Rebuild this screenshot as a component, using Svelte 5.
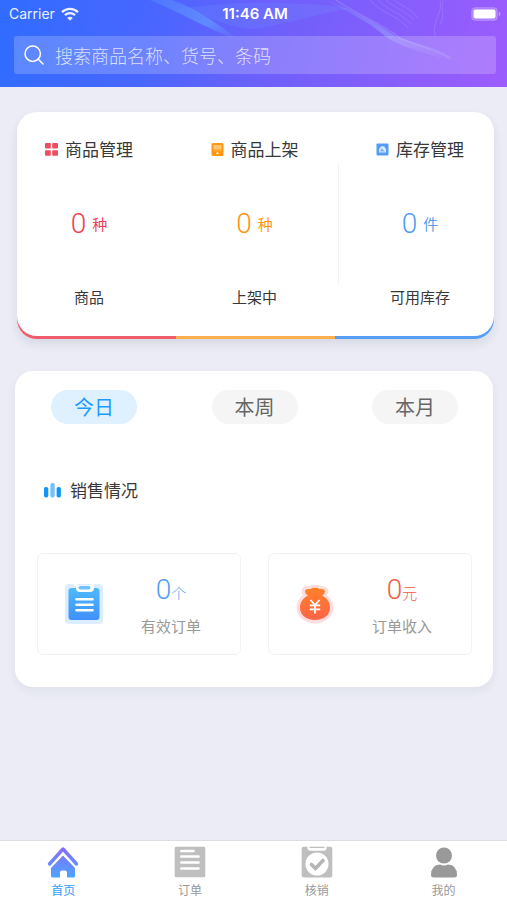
<script>
  let keyword = $state('');
  let period = $state('今日');
  const periods = ['今日', '本周', '本月'];
  const stats = [
    { title: '商品管理', icon: 'grid', value: 0, unit: '种', label: '商品', tone: 'red' },
    { title: '商品上架', icon: 'shelf', value: 0, unit: '种', label: '上架中', tone: 'orange' },
    { title: '库存管理', icon: 'stock', value: 0, unit: '件', label: '可用库存', tone: 'blue' }
  ];
</script>

<div class="page">
  <header>
    <svg class="waves" viewBox="0 0 507 87" preserveAspectRatio="none" aria-hidden="true">
      <defs>
        <linearGradient id="ribbon" x1="0" y1="0" x2="1" y2="1">
          <stop offset="0" stop-color="#8fb0ff" stop-opacity=".1" />
          <stop offset=".5" stop-color="#9db4ff" stop-opacity=".45" />
          <stop offset="1" stop-color="#b99cff" stop-opacity="0" />
        </linearGradient>
        <linearGradient id="streak" x1="0" y1="0" x2="1" y2="1">
          <stop offset="0" stop-color="#5f9cff" stop-opacity=".3" />
          <stop offset=".6" stop-color="#62a0ff" stop-opacity=".65" />
          <stop offset="1" stop-color="#6f8cff" stop-opacity="0" />
        </linearGradient>
      </defs>
      <path d="M150 0C180 12 205 28 240 41C220 25 195 8 172 0Z" fill="url(#streak)" />
      <path d="M185 8C230 2 270 2 300 4C320 4 335 6 350 9C320 12 290 24 253 29C230 28 205 16 185 8Z" fill="#6f9cff" opacity=".2" />
      <path d="M325 0C350 8 375 22 395 36C420 46 440 46 460 62C425 54 395 46 380 32C365 20 345 10 325 0Z" fill="url(#ribbon)" />
      <path d="M336 0C355 14 380 22 400 38C420 47 435 49 450 58" fill="none" stroke="#b7abff" stroke-width="1.5" opacity=".3" />
      <g fill="none" stroke="#b59cff" stroke-width=".8" opacity=".4">
        <path d="M370 0C382 14 396 14 408 28" />
        <path d="M378 0C388 11 400 12 411 24" />
        <path d="M386 0C395 9 405 10 414 20" />
        <path d="M394 0C402 6 410 8 418 18" />
        <path d="M440 0C443 14 432 20 435 37" />
        <path d="M443 0C440 12 446 14 440 24" />
      </g>
    </svg>
    <div class="status">
      <span class="carrier">Carrier
        <svg width="18" height="14" viewBox="0 0 18 14" fill="none" stroke="#fff" stroke-width="2.3" aria-hidden="true">
          <path d="M1 5.1C5.5.7 12.5.7 17 5.1" />
          <path d="M3.9 8.2C6.8 5.5 11.2 5.5 14.1 8.2" />
          <path d="M9 13.7L6.2 10.9C7.8 9.5 10.2 9.5 11.8 10.9Z" fill="#fff" stroke="none" />
        </svg>
      </span>
      <strong>11:46 AM</strong>
      <svg class="battery" width="30" height="14" viewBox="0 0 30 14" aria-hidden="true">
        <rect x=".7" y=".7" width="25.6" height="12.6" rx="3.5" fill="#fff" fill-opacity=".2" stroke="#fff" stroke-opacity=".25" />
        <rect x="2.5" y="2.5" width="22" height="9" rx="2" fill="#fff" />
        <path d="M27.8 5V9Q29.5 8.5 29.5 7T27.8 5Z" fill="#fff" opacity=".4" />
      </svg>
    </div>
    <label class="search">
      <svg width="20" height="20" viewBox="0 0 20 20" fill="none" stroke="#fff" stroke-width="1.5" stroke-linecap="round" aria-hidden="true">
        <circle cx="8.7" cy="8.7" r="7.7" /><path d="M14.3 14.3L19 19" />
      </svg>
      <input type="text" bind:value={keyword} placeholder="搜索商品名称、货号、条码" aria-label="搜索商品名称、货号、条码" />
    </label>
  </header>

  <main>
    <section class="overview">
      <div class="columns">
        {#each stats as s}
          <article class={s.tone}>
            <h2>
              {#if s.icon === 'grid'}
                <svg width="13" height="13" viewBox="0 0 13 13" fill="#f04c60" aria-hidden="true">
                  <rect width="5.8" height="5.5" rx=".8" /><rect x="7.2" width="5.8" height="5.5" rx=".8" />
                  <rect y="7.2" width="5.8" height="5.5" rx=".8" /><rect x="7.2" y="7.2" width="5.8" height="5.5" rx=".8" />
                </svg>
              {:else if s.icon === 'shelf'}
                <svg width="13" height="13" viewBox="0 0 13 13" aria-hidden="true">
                  <rect x=".5" width="12" height="13" rx="1.5" fill="#ff9710" />
                  <rect x="2.5" y="2" width="8" height="4.5" rx=".5" fill="#ffc577" />
                  <path d="M2.5 7.4H10.5" stroke="#ffb44d" stroke-width=".8" />
                  <path d="M6.5 8.8L8 11H5Z" fill="#fff" />
                </svg>
              {:else}
                <svg width="13" height="13" viewBox="0 0 13 13" aria-hidden="true">
                  <rect x=".5" y=".5" width="12" height="12" rx=".8" fill="#559cf6" />
                  <path d="M3 9.5V6L5.3 3.2H8L10 6V9.5Z" fill="#d9eaff" />
                  <path d="M4.5 8.5V6.8L6 5.5L9 8.5Z" fill="#7db5fa" />
                </svg>
              {/if}
              {s.title}
            </h2>
            <p class="value"><b>{s.value}</b><span>{s.unit}</span></p>
            <p class="label">{s.label}</p>
          </article>
        {/each}
      </div>
    </section>

    <section class="sales">
      <div class="tabs">
        {#each periods as p}
          <button type="button" class:active={period === p} aria-pressed={period === p} onclick={() => (period = p)}>{p}</button>
        {/each}
      </div>
      <h2>
        <svg width="17" height="16" viewBox="0 0 17 16" aria-hidden="true">
          <rect y="5" width="4.3" height="10.5" rx="1.8" fill="#1296f5" />
          <rect x="6.4" y="1" width="4.3" height="14.5" rx="1.8" fill="#75bffa" />
          <rect x="12.6" y="5" width="4.3" height="10.5" rx="1.8" fill="#1296f5" />
        </svg>
        销售情况
      </h2>
      <div class="cards">
        <div class="card">
          <svg width="40" height="42" viewBox="0 0 40 42" aria-hidden="true">
            <defs><linearGradient id="order" x1="0" y1="0" x2="0" y2="1"><stop stop-color="#4db9fb" /><stop offset="1" stop-color="#3f91fb" /></linearGradient></defs>
            <rect x="1" y="1" width="38" height="40" rx="4" fill="#dcedff" />
            <rect x="4.5" y="5" width="31" height="32" rx="3" fill="url(#order)" />
            <path d="M10 0H13V2.5H27V0H30V5Q30 9 26 9H16Q12 9 12 5V3H10Z" fill="#fff" />
            <rect x="14.5" y="3" width="12" height="3.5" rx="1.7" fill="#70c1fb" />
            <path d="M12.5 16.3H28.5M12.5 21.8H28.5M12.5 27.3H28.5" stroke="#fff" stroke-width="2.6" stroke-linecap="round" />
          </svg>
          <div class="info blue"><p class="value"><b>0</b><span>个</span></p><p>有效订单</p></div>
        </div>
        <div class="card">
          <svg width="40" height="42" viewBox="0 0 40 42" aria-hidden="true">
            <defs><linearGradient id="money" gradientUnits="userSpaceOnUse" x1="0" y1="5" x2="0" y2="37"><stop stop-color="#ff8128" /><stop offset="1" stop-color="#ff6547" /></linearGradient></defs>
            <g fill="#ffdcdd" stroke="#ffdcdd" stroke-width="7" stroke-linejoin="round">
              <path d="M10 9Q10 6.5 13 6.5H15.5Q18 4.5 20 5.5Q22 4.5 24.5 6.5H27Q30 6.5 30 9L28 13H12Z" />
              <ellipse cx="20" cy="24.5" rx="15" ry="12.5" />
            </g>
            <path d="M10 8.5Q10 6 13 6H15.5Q18 4 20 5Q22 4 24.5 6H27Q30 6 30 8.5Q30 11 27 12.5C32 15 35 19 35 24.5C35 32 29 37 20 37S5 32 5 24.500C5 19 8 15 13 12.500Q10 11 10 8.500Z" fill="url(#money)" />
            <path d="M15.5 17L20 22L24.5 17M20 22V30.5M14.8 22.3H25.2M14.8 26.3H25.2" fill="none" stroke="#fff" stroke-width="1.8" />
          </svg>
          <div class="info coral"><p class="value"><b>0</b><span>元</span></p><p>订单收入</p></div>
        </div>
      </div>
    </section>
  </main>

  <nav>
    <a href="#home" class="current" aria-current="page">
      <svg width="32" height="32" viewBox="0 0 32 32" aria-hidden="true">
        <defs><linearGradient id="home-fill" gradientUnits="userSpaceOnUse" x1="0" y1="0" x2="0" y2="32"><stop stop-color="#8a68fa" /><stop offset="1" stop-color="#4ca6ff" /></linearGradient></defs>
        <path d="M2.5 18L16 3L29.5 18" fill="none" stroke="url(#home-fill)" stroke-width="3.4" stroke-linecap="round" stroke-linejoin="round" />
        <path d="M16 9.5L28 22V30Q28 31.5 26.5 31.5H20V26.5Q20 24.5 18 24.5H15Q13 24.5 13 26.5V31.5H5.5Q4 31.5 4 30V22Z" fill="url(#home-fill)" />
      </svg>
      首页
    </a>
    <a href="#orders">
      <svg width="32" height="32" viewBox="0 0 32 32" aria-hidden="true">
        <rect x=".7" y=".7" width="30.6" height="30.6" rx="1.5" fill="#bfbfbf" />
        <path d="M7.3 5H19.5M7.3 10.5H24.5M7.3 16.5H24.5M7.3 22.5H24.5" stroke="#fff" stroke-width="2.6" stroke-linecap="round" />
      </svg>
      订单
    </a>
    <a href="#verify">
      <svg width="32" height="32" viewBox="0 0 32 32" aria-hidden="true">
        <rect x=".7" y=".7" width="30.6" height="30.8" rx="2" fill="#bfbfbf" />
        <path d="M6.5 0V2Q6.5 4.8 9 4.8H23Q25.5 4.8 25.5 2V0H23.5V2H8.5V0Z" fill="#fff" />
        <circle cx="16" cy="18" r="11.5" fill="#fff" />
        <path d="M10.5 18.5L14.5 22.5L22 14.5" fill="none" stroke="#b5b5b5" stroke-width="3.6" stroke-linecap="round" />
      </svg>
      核销
    </a>
    <a href="#me">
      <svg width="32" height="32" viewBox="0 0 32 32" fill="#999" aria-hidden="true">
        <circle cx="16" cy="9.5" r="8" />
        <path d="M3 29Q3 19 12 18.5Q16 20.5 20 18.5Q29 19 29 29Q29 31.5 26 31.5H6Q3 31.5 3 29Z" />
      </svg>
      我的
    </a>
  </nav>
</div>

<style>
  :global(body) { margin: 0; background: #ebecf5; }
  .page {
    min-height: 100vh;
    display: flex;
    flex-direction: column;
    background: #ebecf5;
    color: #383838;
    font-family: "Noto Sans CJK SC", sans-serif;
  }
  h2, p { margin: 0; font-weight: 400; }
  svg { flex: none; }
  header {
    position: relative;
    padding: 0 11px 13px 14px;
    background: linear-gradient(100deg, #306cff 0%, #4966ff 30%, #6c60fb 52%, #9d5cfd 100%);
  }
  .waves { position: absolute; inset: 0; width: 100%; height: 100%; }
  .status {
    position: relative;
    display: grid;
    grid-template-columns: 1fr auto 1fr;
    align-items: center;
    height: 28px;
    margin: 0 -5px 8px;
    color: #fff;
    font: 14px/20px Inter, "Liberation Sans", sans-serif;
  }
  .status strong { font-size: 15px; font-weight: 600; }
  .carrier { display: flex; align-items: center; gap: 6px; opacity: .9; }
  .battery { justify-self: end; }
  .search {
    position: relative;
    display: flex;
    align-items: center;
    gap: 11px;
    height: 38px;
    padding: 0 10px;
    border-radius: 3px;
    background: rgba(255, 255, 255, .2);
  }
  .search input {
    flex: 1;
    min-width: 0;
    padding: 0;
    border: 0;
    outline: 0;
    background: none;
    color: #fff;
    font: 300 18px/26px "Noto Sans CJK SC", sans-serif;
  }
  .search input::placeholder { color: rgba(255, 255, 255, .75); opacity: 1; }
  main { flex: 1; padding: 25px 14px 24px 15px; }
  .overview {
    margin: 0 -1px 32px 2px;
    padding-bottom: 3px;
    border-radius: 20px;
    background: linear-gradient(90deg, #f05c6c 0 33.33%, #ffad4d 33.33% 66.66%, #559df5 66.66%) bottom / 100% 48px no-repeat;
    box-shadow: 0 5px 10px rgba(40, 45, 80, .1);
  }
  .columns {
    display: flex;
    justify-content: space-between;
    padding: 24px 30px 28px 28px;
    border-radius: 20px;
    background: #fff;
  }
  article { position: relative; width: 88px; text-align: center; }
  article h2 {
    display: flex;
    align-items: center;
    justify-content: center;
    gap: 7px;
    font-size: 17px;
    line-height: 26px;
    white-space: nowrap;
  }
  article:last-child::before {
    content: "";
    position: absolute;
    left: -38px;
    top: 27px;
    bottom: 23px;
    border-left: 1px solid #f3f3f5;
  }
  .value { display: flex; align-items: baseline; justify-content: center; }
  .value b { font-family: Roboto, "Noto Sans", sans-serif; font-size: 28px; font-weight: 300; }
  .value span { font-size: 15px; }
  article .value { align-items: center; gap: 6px; margin: 44px 0; line-height: 36px; }
  .label { font-size: 15px; line-height: 22px; }
  .red .value { color: #ee4158; }
  .orange .value { color: #ff9412; }
  .blue .value { color: #559cf0; }
  .coral .value { color: #f65b45; }
  .sales {
    padding: 19px 21px 32px 22px;
    border-radius: 18px;
    background: #fff;
    box-shadow: 0 4px 10px rgba(40, 45, 80, .06);
  }
  .tabs { display: flex; justify-content: space-between; padding: 0 14px; }
  .tabs button {
    width: 86px;
    height: 34px;
    padding: 0;
    border: 0;
    border-radius: 17px;
    background: #f5f5f5;
    color: #666;
    font: 20px/34px "Noto Sans CJK SC", sans-serif;
    cursor: pointer;
  }
  .tabs .active { background: #dff0ff; color: #1c9cff; }
  .sales h2 {
    display: flex;
    align-items: center;
    gap: 9px;
    margin: 53px 7px 50px;
    font-size: 17px;
    line-height: 26px;
  }
  .cards { display: flex; gap: 27px; }
  .card {
    flex: 1;
    display: flex;
    align-items: center;
    gap: 37px;
    height: 100px;
    padding-left: 26px;
    border: 1px solid #f3f3f3;
    border-radius: 6px;
  }
  .info { color: #999; font-size: 15px; line-height: 22px; text-align: center; }
  .info .value { margin-bottom: 4px; line-height: 36px; font-weight: 300; }
  nav {
    display: flex;
    border-top: 1px solid #dcdce2;
    background: #fff;
  }
  nav a {
    flex: 1;
    display: flex;
    flex-direction: column;
    align-items: center;
    gap: 3px;
    padding: 5px 0 1px;
    color: #999;
    font-size: 12px;
    line-height: 18px;
    text-decoration: none;
  }
  nav .current { color: #2f9df5; }
</style>
